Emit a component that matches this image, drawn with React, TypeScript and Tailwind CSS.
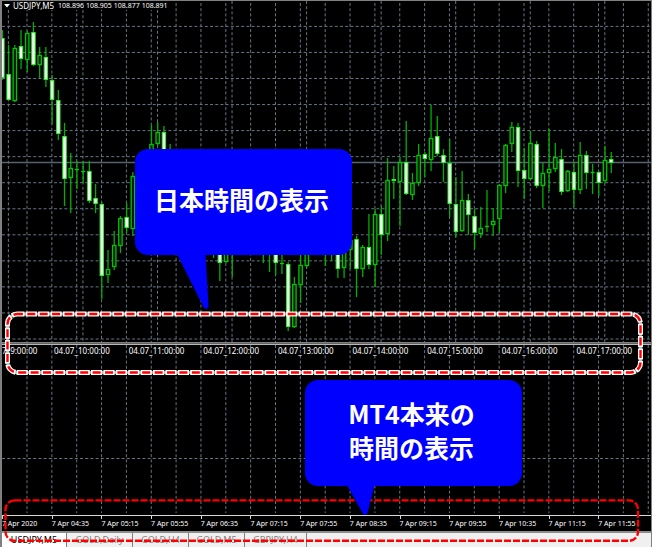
import { clsx } from "clsx";

type Candle = [index: number, high: number, top: number, bottom: number, low: number, bear: 0 | 1];

const STEP = 6.2125;

const CANDLES: Candle[] = [
  [0, 30, 38, 78, 80, 1], [1, 45, 74, 100, 101, 1], [2, 45, 48, 101, 102, 0], [3, 30, 46, 59, 69, 1],
  [4, 31, 33, 60, 72, 0], [5, 22, 32, 65, 66, 1], [6, 47, 55, 65, 78, 0], [7, 47, 57, 80, 87, 1],
  [8, 75, 80, 100, 124, 1], [9, 90, 100, 134, 140, 1], [10, 123, 136, 179, 206, 1], [11, 153, 168, 178, 213, 0],
  [12, 161, 169, 170, 189, 0], [13, 161, 171, 172, 183, 0], [14, 161, 171, 201, 203, 1], [15, 184, 198, 204, 213, 1],
  [16, 202, 204, 276, 299, 1], [17, 250, 269, 275, 283, 0], [18, 231, 245, 267, 270, 0], [19, 216, 218, 246, 253, 0],
  [20, 203, 217, 228, 233, 1], [21, 172, 176, 229, 236, 0], [22, 160, 170, 200, 210, 0], [23, 150, 155, 180, 190, 0],
  [24, 125, 144, 170, 180, 0], [25, 122, 132, 144, 146, 0], [26, 126, 132, 160, 170, 1], [27, 144, 152, 180, 190, 1],
  [28, 155, 170, 195, 200, 1], [29, 170, 180, 205, 215, 1], [30, 180, 190, 215, 225, 0], [31, 185, 195, 225, 235, 1],
  [32, 200, 210, 235, 245, 1], [33, 210, 220, 245, 250, 0], [34, 215, 225, 250, 258, 1], [35, 220, 235, 263, 281, 1],
  [36, 225, 240, 262, 263, 0], [37, 225, 230, 250, 277, 0], [38, 215, 225, 245, 250, 0], [39, 210, 220, 240, 250, 1],
  [40, 215, 225, 245, 252, 0], [41, 220, 230, 250, 254, 1], [42, 220, 230, 250, 263, 0], [43, 225, 235, 250, 272, 1],
  [44, 230, 240, 263, 275, 1], [45, 240, 263, 264, 274, 0], [46, 262, 264, 327, 331, 1], [47, 277, 284, 327, 328, 0],
  [48, 240, 265, 285, 303, 0], [49, 235, 240, 266, 268, 0], [50, 220, 230, 245, 252, 0], [51, 220, 230, 250, 254, 1],
  [52, 225, 235, 250, 266, 0], [53, 225, 235, 250, 261, 1], [54, 230, 240, 269, 278, 1], [55, 232, 240, 268, 278, 0],
  [56, 236, 240, 250, 269, 0], [57, 236, 239, 269, 297, 1], [58, 245, 247, 269, 277, 0], [59, 214, 247, 265, 269, 1],
  [60, 209, 214, 265, 287, 0], [61, 206, 214, 235, 255, 1], [62, 158, 180, 234, 241, 0], [63, 166, 179, 181, 199, 1],
  [64, 157, 162, 182, 226, 0], [65, 121, 162, 194, 195, 1], [66, 173, 183, 195, 200, 0], [67, 144, 155, 183, 186, 0],
  [68, 152, 154, 159, 177, 1], [69, 105, 138, 160, 171, 0], [70, 116, 136, 154, 156, 1], [71, 149, 155, 163, 182, 1],
  [72, 139, 163, 204, 217, 1], [73, 177, 204, 232, 237, 1], [74, 171, 200, 231, 232, 0], [75, 194, 200, 215, 235, 1],
  [76, 209, 216, 233, 249, 1], [77, 207, 228, 234, 238, 0], [78, 190, 226, 227, 232, 0], [79, 208, 221, 225, 236, 0],
  [80, 184, 185, 219, 233, 0], [81, 144, 145, 186, 193, 0], [82, 122, 127, 144, 152, 0], [83, 123, 127, 171, 187, 1],
  [84, 148, 170, 179, 199, 1], [85, 131, 143, 179, 180, 0], [86, 141, 144, 186, 188, 1], [87, 163, 173, 186, 208, 0],
  [88, 129, 169, 173, 191, 0], [89, 143, 157, 169, 172, 0], [90, 149, 159, 192, 195, 1], [91, 170, 171, 191, 192, 0],
  [92, 162, 172, 190, 207, 1], [93, 142, 155, 190, 194, 0], [94, 151, 155, 173, 189, 1], [95, 164, 172, 173, 194, 0],
  [96, 171, 172, 183, 196, 1], [97, 146, 160, 181, 183, 0], [98, 152, 159, 163, 173, 1],
];

const GRID_X = Array.from({ length: 26 }, (_, i) => 27 + i * STEP * 4);
const HOUR_X = Array.from({ length: 9 }, (_, i) => 8.4 + i * STEP * 12);
const GRID_Y = Array.from({ length: 13 }, (_, i) => 26.4 + i * 26.05);

const PRICES = ["108.896", "108.905", "108.877", "108.891"];
const JST_HOURS = [10, 11, 12, 13, 14, 15, 16, 17];
const AXIS_TIMES = [
  "2020", "04:35", "05:15", "05:55", "06:35", "07:15", "07:55",
  "08:35", "09:15", "09:55", "10:35", "11:15", "11:55",
];
const TABS = [
  { label: "USDJPY,M5", width: "w-[65px]" },
  { label: "GOLD,Daily", width: "w-[66px]" },
  { label: "GOLD,H4", width: "w-[56px]" },
  { label: "GOLD,M5", width: "w-[56px]" },
  { label: "GBPJPY,H4", width: "w-[62px]" },
];

function PriceChart() {
  return (
    <svg viewBox="2 1 649 341" className="block w-full [grid-area:1/1]">
      <g stroke="#667482" strokeDasharray="3 2.2">
        {GRID_X.map((x) => <line key={x} x1={x} x2={x} y1={3} y2={342} />)}
        {HOUR_X.map((x) => <line key={x} x1={x} x2={x} y1={x < 170 ? 10 : 1} y2={342} />)}
        {GRID_Y.map((y) => <line key={y} x1={2} x2={651} y1={y} y2={y} />)}
      </g>
      <line x1={2} x2={651} y1={162.5} y2={162.5} stroke="#56636f" strokeWidth={1.4} />
      {CANDLES.map(([i, high, top, bottom, low, bear]) => {
        const x = 2.4 + i * STEP;
        return (
          <g key={i} strokeWidth={1.3}>
            <line x1={x} x2={x} y1={high} y2={low} stroke="#00b000" />
            {bottom - top <= 1 ? (
              <line x1={x - 2} x2={x + 2} y1={top + 0.5} y2={top + 0.5} stroke="#00d000" />
            ) : (
              <rect
                x={x - 1.7}
                y={top + 0.5}
                width={3.4}
                height={bottom - top - 1}
                fill={bear ? "#ffffff" : "#001800"}
                stroke={bear ? "#20f820" : "#00c400"}
                strokeWidth={bear ? 1 : 1.3}
              />
            )}
          </g>
        );
      })}
    </svg>
  );
}

function IndicatorGrid() {
  return (
    <svg viewBox="2 345 649 170" className="block w-full [grid-area:1/1]">
      <g stroke="#667482" strokeDasharray="3 2.2">
        {GRID_X.map((x) => <line key={x} x1={x} x2={x} y1={345} y2={513} />)}
        <line x1={2} x2={651} y1={458.5} y2={458.5} />
      </g>
    </svg>
  );
}

function Highlights() {
  return (
    <svg viewBox="0 0 652 547" fill="none" className="pointer-events-none absolute inset-x-0 top-0 w-full">
      <rect x={7.5} y={314} width={633} height={58.5} rx={10} stroke="#a8a8a8" strokeWidth={3} />
      <rect x={7.5} y={314} width={633} height={58.5} rx={10} stroke="#ffffff" strokeWidth={5} strokeDasharray="11.2 1.2" strokeDashoffset={4.2} />
      <rect x={7.5} y={314} width={633} height={58.5} rx={10} stroke="#ff0000" strokeWidth={2.4} strokeDasharray="8 4.4" strokeDashoffset={2.6} />
      <rect x={5.5} y={500.4} width={632.5} height={40.4} rx={9} stroke="#ff0000" strokeWidth={2.4} strokeDasharray="7 2" />
    </svg>
  );
}

function Callout({ lines, className, tail }: { lines: string[]; className: string; tail: string }) {
  return (
    <div className={clsx("absolute h-[106px] w-[217px]", className)}>
      <div className="flex h-full flex-col items-center justify-center rounded-[13px] bg-[#0000ff] pr-1 pb-[6px] font-['Noto_Sans_CJK_JP',sans-serif] text-[25px] leading-[34px] font-bold text-white">
        {lines.map((line) => <p key={line} className="whitespace-nowrap">{line}</p>)}
      </div>
      <svg viewBox="0 105 217 60" className="absolute top-[105px] left-0 w-full">
        <path d={tail} fill="#0000ff" />
      </svg>
    </div>
  );
}

export default function App() {
  return (
    <div className="relative overflow-hidden border-t border-r border-l-2 border-[#808080] bg-black font-['Noto_Sans',sans-serif] text-white">
      <section className="grid">
        <PriceChart />
        <header className="flex h-[9px] items-center gap-[3px] self-start justify-self-start bg-black pl-[2px] text-[7px] leading-[9px] whitespace-nowrap [grid-area:1/1]">
          <svg viewBox="0 0 6 4" className="w-[6px]">
            <path d="M0 0h6L3 3.5z" fill="#fff" />
          </svg>
          <h1 className="w-[42px] text-[8px]">USDJPY,M5</h1>
          <p className="flex gap-[2px]">
            {PRICES.map((price) => <span key={price}>{price}</span>)}
          </p>
        </header>
      </section>

      <div className="h-[3px] border-y border-t-[#808080] border-b-[#b8b8b8] bg-[#606060]" />

      <section className="grid">
        <IndicatorGrid />
        <div className="flex self-start text-[8px] leading-[11px] whitespace-nowrap [grid-area:1/1]">
          <div className="w-[52px] shrink-0">7_9:00:00</div>
          <div className="grid flex-1 grid-cols-8">
            {JST_HOURS.map((hour) => <span key={hour}>04.07_{hour}:00:00</span>)}
          </div>
        </div>
      </section>

      <div className="grid h-4 grid-cols-13 border-t border-[#d8d8d8] pr-[3px] text-[7px] leading-[9px] whitespace-nowrap">
        {AXIS_TIMES.map((time) => (
          <div key={time}>
            <div className="h-[3px] w-px bg-[#d8d8d8]" />
            <span>7 Apr {time}</span>
          </div>
        ))}
      </div>

      <nav className="flex h-4 border-t-2 border-[#8c8c8c] bg-[#f0f0f0] text-[9px] leading-[11px]">
        {TABS.map((tab, i) => (
          <button
            key={tab.label}
            type="button"
            className={clsx(
              "shrink-0 border-r border-[#808080] pb-px text-center whitespace-nowrap",
              tab.width,
              i === 0 ? "bg-white text-black" : "text-[#808080]",
            )}
          >
            {tab.label}
          </button>
        ))}
      </nav>

      <div className="absolute -top-px -right-px bottom-0 -left-[2px]">
        <Highlights />
      </div>
      <Callout
        lines={["日本時間の表示"]}
        className="top-[148px] left-[133px]"
        tail="M42 105H70.500L73.500 157Q73.500 160 71 160Q69 160 68 157Z"
      />
      <Callout
        lines={["MT4本来の", "時間の表示"]}
        className="top-[379px] left-[303px]"
        tail="M42 105H69.500L62.500 133Q61.500 135 60 135Q58.500 135 57.500 133Z"
      />
    </div>
  );
}
